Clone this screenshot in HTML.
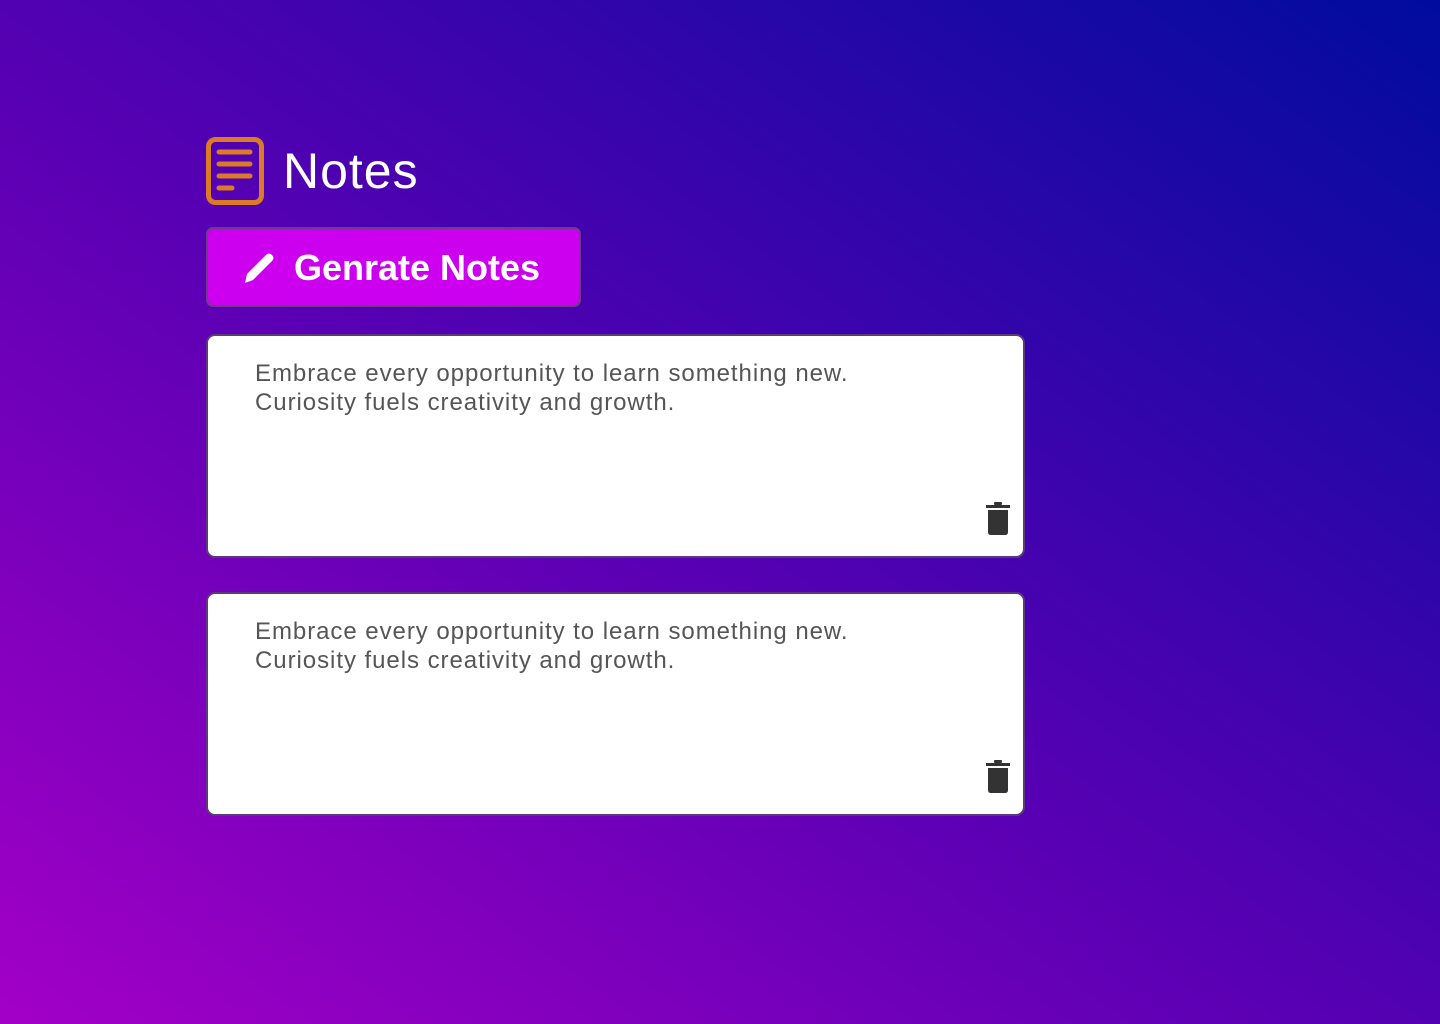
<!DOCTYPE html>
<html><head><meta charset="utf-8"><style>
html,body{margin:0;padding:0;width:1440px;height:1024px;overflow:hidden}
body{background:linear-gradient(to top right,#a300c6 0%,#5a00b4 45%,#000c9e 100%);font-family:"Liberation Sans",sans-serif;position:relative}
.icon{position:absolute;left:206px;top:137px}
.title{position:absolute;left:283px;top:140px;font-size:50px;color:#fff;line-height:62px;letter-spacing:1px}
.btn{position:absolute;left:206px;top:227px;width:371px;height:76px;background:#cc00ee;border:2px solid #6b3c8c;border-radius:7px;box-sizing:content-box}
.btn span{position:absolute;left:86px;top:18px;font-size:36px;font-weight:bold;color:#fff;line-height:42px}
.btn svg{position:absolute;left:34px;top:22px}
.card{position:absolute;left:206px;width:815px;height:220px;background:#fff;border:2px solid #5b3a7c;border-radius:9px}
.card p{margin:0;position:absolute;left:47px;top:23px;font-size:24px;line-height:29px;color:#555;letter-spacing:0.95px}
.card svg{position:absolute;left:777px;top:166px}
</style></head><body>
<svg class="icon" width="58" height="68" viewBox="0 0 58 68"><rect x="2.5" y="2.5" width="53" height="63" rx="7" fill="none" stroke="#dc7b26" stroke-width="5"/><g stroke="#dc7b26" stroke-width="5" stroke-linecap="round"><line x1="13" y1="15" x2="44" y2="15"/><line x1="13" y1="27" x2="44" y2="27"/><line x1="13" y1="39" x2="44" y2="39"/><line x1="13" y1="51" x2="26" y2="51"/></g></svg>
<div class="title">Notes</div>
<div class="btn"><svg width="34" height="34" viewBox="0 0 34 34"><path d="M3 32 L5 23 L24 4 Q27 1 30 4 Q33 7 30 10 L11 29 Z" fill="#fff"/></svg><span>Genrate Notes</span></div>
<div class="card" style="top:334px"><p>Embrace every opportunity to learn something new.<br>Curiosity fuels creativity and growth.</p><svg width="26" height="34" viewBox="0 0 26 34"><rect x="9" y="0" width="8" height="3" rx="1" fill="#333"/><rect x="1" y="3" width="24" height="3" fill="#333"/><path d="M3 8 H23 V30 Q23 33 20 33 H6 Q3 33 3 30 Z" fill="#333"/></svg></div>
<div class="card" style="top:592px"><p>Embrace every opportunity to learn something new.<br>Curiosity fuels creativity and growth.</p><svg width="26" height="34" viewBox="0 0 26 34"><rect x="9" y="0" width="8" height="3" rx="1" fill="#333"/><rect x="1" y="3" width="24" height="3" fill="#333"/><path d="M3 8 H23 V30 Q23 33 20 33 H6 Q3 33 3 30 Z" fill="#333"/></svg></div>
</body></html>
